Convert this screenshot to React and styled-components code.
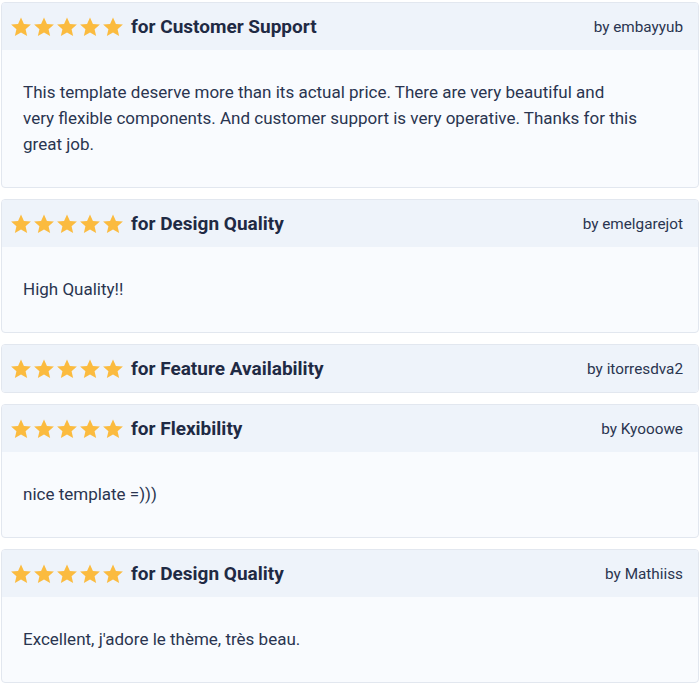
import React from 'react';
import styled, { createGlobalStyle } from "styled-components";

const GlobalStyle = createGlobalStyle`
  body {
    margin: 0;
    background: #ffffff;
    font-family: Roboto, "Liberation Sans", sans-serif;
    color: #1f2a44;
  }
`;

const List = styled.div`
  display: flex;
  flex-direction: column;
  gap: 11px;
  padding: 2px 1px 0 1px;
`;

const Card = styled.div`
  border: 1px solid #e2e7ef;
  border-radius: 4px;
  overflow: hidden;
  background: #f9fbfe;
`;

const Header = styled.div`
  height: 47px;
  display: flex;
  align-items: center;
  justify-content: space-between;
  padding: 0 15px 0 8px;
  background: #eef3fa;
`;

const Left = styled.div`
  display: flex;
  align-items: center;
`;

const Stars = styled.div`
  display: flex;
  gap: 1px;
  margin-right: 7px;
`;

const Title = styled.span`
  font-size: 19px;
  font-weight: 700;
  color: #1f2a44;
`;

const Author = styled.span`
  font-size: 15.3px;
  color: #2a3550;
`;

const Body = styled.div`
  padding: 29px 21px 30px;
  font-size: 17px;
  line-height: 26px;
  color: #2a3550;
  white-space: pre-line;
`;

const Star = () => (
  <svg width="22" height="22" viewBox="0 0 24 24">
    <path
      fill="#fbbb3f"
      d="M12 1.5l3.2 7.1 7.6.7-5.8 5.1 1.7 7.5L12 17.9l-6.7 4 1.7-7.5-5.8-5.1 7.6-.7z"
    />
  </svg>
);

const reviews = [
  {
    title: "for Customer Support",
    author: "embayyub",
    text: "This template deserve more than its actual price. There are very beautiful and\nvery flexible components. And customer support is very operative. Thanks for this\ngreat job.",
  },
  { title: "for Design Quality", author: "emelgarejot", text: "High Quality!!" },
  { title: "for Feature Availability", author: "itorresdva2" },
  { title: "for Flexibility", author: "Kyooowe", text: "nice template =)))" },
  { title: "for Design Quality", author: "Mathiiss", text: "Excellent, j'adore le thème, très beau." },
];

const App = () => {
  return (
    <>
      <GlobalStyle />
      <List>
        {reviews.map((r, i) => (
          <Card key={i}>
            <Header>
              <Left>
                <Stars>
                  {[0, 1, 2, 3, 4].map((s) => <Star key={s} />)}
                </Stars>
                <Title>{r.title}</Title>
              </Left>
              <Author>by {r.author}</Author>
            </Header>
            {r.text && <Body>{r.text}</Body>}
          </Card>
        ))}
      </List>
    </>
  );
};

export default App;
